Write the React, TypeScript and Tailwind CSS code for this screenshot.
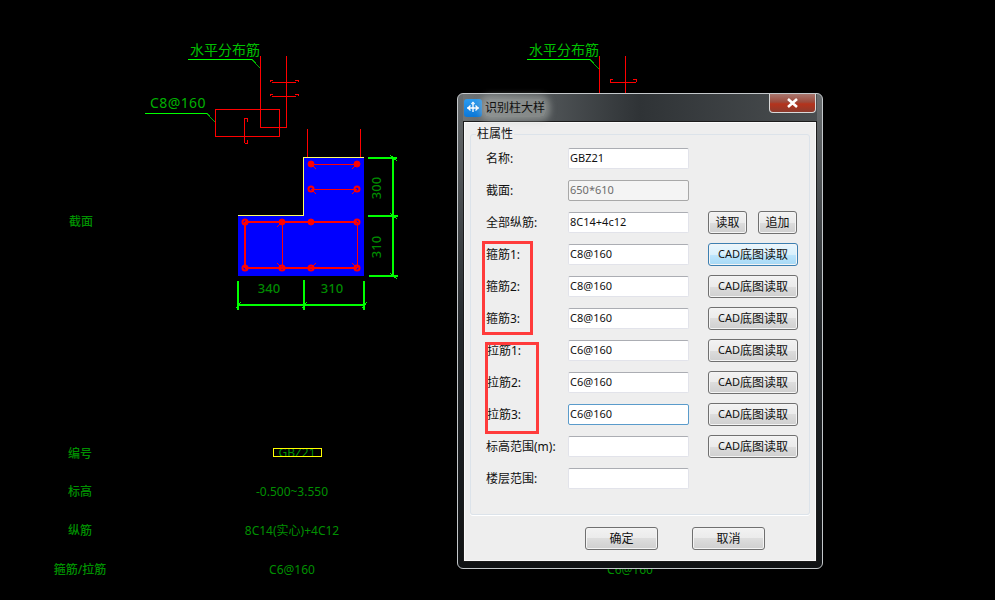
import React from 'react';

const CAD_FONT = { fontFamily: '"Noto Sans", "Noto Sans CJK SC", sans-serif' };

const rows = [
  { label: '名称:', value: 'GBZ21' },
  { label: '截面:', value: '650*610', disabled: true },
  { label: '全部纵筋:', value: '8C14+4c12', pair: true },
  { label: '箍筋1:', value: 'C8@160', cad: true, hot: true },
  { label: '箍筋2:', value: 'C8@160', cad: true },
  { label: '箍筋3:', value: 'C8@160', cad: true },
  { label: '拉筋1:', value: 'C6@160', cad: true, indent: true },
  { label: '拉筋2:', value: 'C6@160', cad: true, indent: true },
  { label: '拉筋3:', value: 'C6@160', cad: true, indent: true, focus: true },
  { label: '标高范围(m):', value: '', cad: true },
  { label: '楼层范围:', value: '' },
];

const tableRows = [
  { y: 453, name: '编号', value: '' },
  { y: 491, name: '标高', value: '-0.500~3.550' },
  { y: 530, name: '纵筋', value: '8C14(实心)+4C12' },
  { y: 569, name: '箍筋/拉筋', value: 'C6@160' },
];

// x, y, filled
const bars: [number, number, boolean][] = [
  [311, 164, true], [357, 164, true], [311, 189, false], [357, 189, false],
  [245, 222, false], [282, 222, true], [311, 222, true], [357, 222, false],
  [245, 268, false], [282, 268, false], [311, 268, false], [357, 268, false],
];

const WinButton: React.FC<{ className: string; hot?: boolean; children: React.ReactNode }> = ({ className, hot, children }) => (
  <button
    className={`flex items-center justify-center rounded-[3px] border pt-[1px] text-[12px] text-[#111] shadow-[inset_0_0_0_1px_#f4f4f4] ${
      hot
        ? 'border-[#3c7fb1] bg-[linear-gradient(#eaf6fd,#d9f0fc_50%,#bee6fd_50%,#a7d9f5)]'
        : 'border-[#707070] bg-[linear-gradient(#f2f2f2,#ebebeb_50%,#dddddd_50%,#cfcfcf)]'
    } ${className}`}
  >
    {children}
  </button>
);

const CadDrawing = () => (
  <svg className="absolute inset-0" width={995} height={600} style={CAD_FONT}>
    {/* blue section */}
    <polygon points="304,157 364,157 364,276 238,276 238,215 304,215" fill="#0000ff" />
    <g shapeRendering="crispEdges" fill="none">
      <polyline points="238,215.5 303.5,215.5 303.5,157.5 364,157.5" stroke="#ffff66" strokeWidth={1} />

      {/* wall detail */}
      <g stroke="#ff0000" strokeWidth={1}>
        <line x1={260.5} y1={56} x2={260.5} y2={128} />
        <line x1={286.5} y1={56} x2={286.5} y2={127} />
        <line x1={260} y1={127.5} x2={287} y2={127.5} />
        <line x1={272} y1={82.5} x2={296} y2={82.5} />
        <line x1={272} y1={96.5} x2={296} y2={96.5} />
        <path d="M270 82V80H273M298 82V80H295M270 96V94H273M298 96V94H295" />
        <path d="M215.5 109.5H279.5V136.5H215.5Z" />
        <path d="M244.5 143V118H247.5V122M244.5 143H247.5V140" />
        <line x1={307.5} y1={129} x2={307.5} y2={157} />
        <line x1={360.5} y1={129} x2={360.5} y2={157} />
        <line x1={599.5} y1={56} x2={599.5} y2={94} />
        <line x1={625.5} y1={56} x2={625.5} y2={94} />
        <line x1={610} y1={82.5} x2={636} y2={82.5} />
        <path d="M610 82V79H613M636 82V79H633" />
      </g>

      {/* leaders */}
      <g stroke="#00ff00" strokeWidth={1}>
        <path d="M188 59.5H252" />
        <path d="M145 113.5H207" />
        <path d="M527 59.5H590" />
      </g>
      <g stroke="#00b000" strokeWidth={1}>
        <path d="M252 59.5L260 68" />
        <path d="M207 113.5L215 122" />
        <path d="M590 59.5L599 69" />
      </g>

      {/* stirrups */}
      <g stroke="#ff0000">
        <line x1={311} y1={164.5} x2={357} y2={164.5} strokeWidth={1} />
        <line x1={311} y1={189.5} x2={357} y2={189.5} strokeWidth={1} />
        <line x1={245} y1={222} x2={357} y2={222} strokeWidth={2} />
        <line x1={245} y1={268} x2={357} y2={268} strokeWidth={2} />
        <line x1={245} y1={222} x2={245} y2={268} strokeWidth={2} />
        <line x1={282.5} y1={222} x2={282.5} y2={268} strokeWidth={1} />
        <line x1={357.5} y1={222} x2={357.5} y2={268} strokeWidth={1} />
        {/* hook ticks at the bars */}
        <path d="M311 164L316 169M357 164L352 169M311 189L316 194M357 189L352 194M282 222L277 227M282 268L277 263M311 268L316 263M357 268L352 263" strokeWidth={1} />
      </g>

      {/* dimensions */}
      <g stroke="#00ff00" strokeWidth={2}>
        <line x1={368} y1={157.5} x2={397} y2={157.5} />
        <line x1={368} y1={216} x2={398} y2={216} />
        <line x1={369} y1={276} x2={398} y2={276} />
        <line x1={393} y1={157} x2={393} y2={276} />
        <line x1={238} y1={281} x2={238} y2={310} />
        <line x1={304} y1={280} x2={304} y2={310} />
        <line x1={364} y1={281} x2={364} y2={310} />
        <line x1={238} y1={305} x2={365} y2={305} />
      </g>
      <g stroke="#00ff00" strokeWidth={1}>
        <path d="M390 155L397 161M390 213L397 219M390 273L397 279" />
        <path d="M236 308L241 302M302 308L307 302M362 308L367 302" />
      </g>
    </g>

    {bars.map(([x, y, filled]) => (
      <circle key={`${x}-${y}`} cx={x} cy={y} r={filled ? 3 : 2.5} fill={filled ? '#ff0000' : 'none'} stroke="#ff0000" strokeWidth={filled ? 1 : 2} />
    ))}

    {/* annotations */}
    <text x={190} y={55} fontSize={14} fill="#00c000">水平分布筋</text>
    <text x={529} y={55} fontSize={14} fill="#00c000">水平分布筋</text>
    <text x={150} y={108} fontSize={14} letterSpacing={0.4} fill="#00b000">C8@160</text>
    <text x={269} y={293} fontSize={13} fill="#008a00" fontWeight={500} textAnchor="middle">340</text>
    <text x={332} y={293} fontSize={13} fill="#008a00" fontWeight={500} textAnchor="middle">310</text>
    <text x={381} y={188} fontSize={13} fill="#008a00" fontWeight={500} textAnchor="middle" transform="rotate(-90 381 188)">300</text>
    <text x={381} y={247} fontSize={13} fill="#008a00" fontWeight={500} textAnchor="middle" transform="rotate(-90 381 247)">310</text>

    {/* schedule table */}
    <text x={81} y={226} fontSize={12} fill="#009000" fontWeight={500} textAnchor="middle">截面</text>
    {tableRows.map((r) => (
      <g key={r.name}>
        <text x={80} y={r.y + 5} fontSize={12} fill="#009000" fontWeight={500} textAnchor="middle">{r.name}</text>
        {r.value && <text x={292} y={r.y + 5} fontSize={12} fill="#009000" textAnchor="middle">{r.value}</text>}
      </g>
    ))}
    <text x={297} y={457} fontSize={12} fill="#009000" textAnchor="middle">GBZ21</text>
    <path d="M273.5 448.5H321.5V456.5H273.5Z" fill="none" stroke="#ffff00" shapeRendering="crispEdges" />
    <text x={630} y={574} fontSize={12} fill="#009000" textAnchor="middle">C6@160</text>
  </svg>
);

const Dialog = () => (
  <div
    className="absolute left-[457px] top-[93px] flex h-[476px] w-[366px] flex-col rounded-[6px] border border-[#c4c8cb] bg-gradient-to-b from-[#6a6e70] via-[#24282b] to-[#101214] px-[5px] pb-[6px]"
    style={{ fontFamily: '"Noto Sans", "Noto Sans CJK SC", sans-serif' }}
  >
    {/* title bar */}
    <div className="relative flex h-[27px] shrink-0 items-center gap-[2px] bg-gradient-to-r from-[#6f7476] via-[#2f3336] to-[#4a4e50] pl-[1px]">
      <div className="flex h-[18px] w-[18px] items-center justify-center rounded-[3px] bg-gradient-to-b from-[#2a9bf0] to-[#0a78d8]">
        <svg width={14} height={14} viewBox="0 0 14 14" fill="none" stroke="#fff" strokeWidth={1.3}>
          <path d="M1 7H13M7 3V11M4.5 4.5L2 7L4.5 9.5M9.5 4.5L12 7L9.5 9.5M5.5 3L7 1.5L8.5 3" />
        </svg>
      </div>
      <span className="rounded-[6px] bg-[#b5bab6]/50 px-[1px] text-[12px] text-[#111] shadow-[0_0_6px_4px_rgba(181,186,182,0.5)]">识别柱大样</span>
      <div className="absolute right-[1px] top-[0px] flex h-[19px] w-[47px] items-center justify-center rounded-b-[4px] border border-[#d9d9d9] border-t-0 bg-[linear-gradient(#a8766e,#9c4a3b_45%,#b5331c_55%,#8c3a2c)]">
        <svg width={13} height={10} viewBox="0 0 13 10">
          <path d="M2 1L11 9M11 1L2 9" stroke="#fff" strokeWidth={2.6} />
        </svg>
      </div>
    </div>

    {/* client area */}
    <div className="flex-1 border border-[#1b1b1b] bg-[#eeeeee] px-[6px] pt-[12px] shadow-[inset_0_0_0_1px_#fafafa]">
      <div className="relative h-[381px] rounded-[3px] border border-[#dce3ea] pl-[15px] pt-[7px] shadow-[0_1px_0_#fff]">
        <span className="absolute left-[5px] top-[-8px] bg-[#eeeeee] px-[1px] text-[12px] leading-[14px] text-[#111]">柱属性</span>
        {rows.map((r) => (
          <div key={r.label} className="flex h-[32px] items-center">
            <span className={`w-[82px] shrink-0 pt-[2px] text-[12px] text-[#111] ${r.indent ? 'pl-[1px]' : ''}`}>{r.label}</span>
            <input
              readOnly
              value={r.value}
              className={`h-[21px] w-[121px] shrink-0 rounded-[2px] border px-[1px] pb-[1px] text-[11px] outline-none ${
                r.disabled
                  ? 'border-[#a8a8a8] bg-[#f4f4f4] text-[#6d6d6d]'
                  : r.focus
                    ? 'border-[#5a9bcb] bg-white text-[#111]'
                    : 'border-[#e2e3ea] border-t-[#abadb3] bg-white text-[#111]'
              }`}
            />
            {r.pair && (
              <div className="ml-[19px] flex gap-[11px]">
                <WinButton className="h-[23px] w-[39px]">读取</WinButton>
                <WinButton className="h-[23px] w-[39px]">追加</WinButton>
              </div>
            )}
            {r.cad && (
              <WinButton className="ml-[19px] h-[23px] w-[90px]" hot={r.hot}>
                <span className="text-[11px]">CAD</span>底图读取
              </WinButton>
            )}
          </div>
        ))}
      </div>
      <div className="mt-[12px] flex gap-[34px] pl-[115px]">
        <WinButton className="h-[23px] w-[73px]">确定</WinButton>
        <WinButton className="h-[23px] w-[73px]">取消</WinButton>
      </div>
    </div>
  </div>
);

export default function App() {
  return (
    <div className="relative h-[600px] w-[995px] overflow-hidden bg-black">
      <CadDrawing />
      <Dialog />
      {/* review marks drawn over the screenshot */}
      <div className="absolute left-[482px] top-[241px] h-[94px] w-[51px] border-[3px] border-[#ff3b3b]" />
      <div className="absolute left-[485px] top-[342px] h-[92px] w-[54px] border-[3px] border-[#ff3b3b]" />
    </div>
  );
}
